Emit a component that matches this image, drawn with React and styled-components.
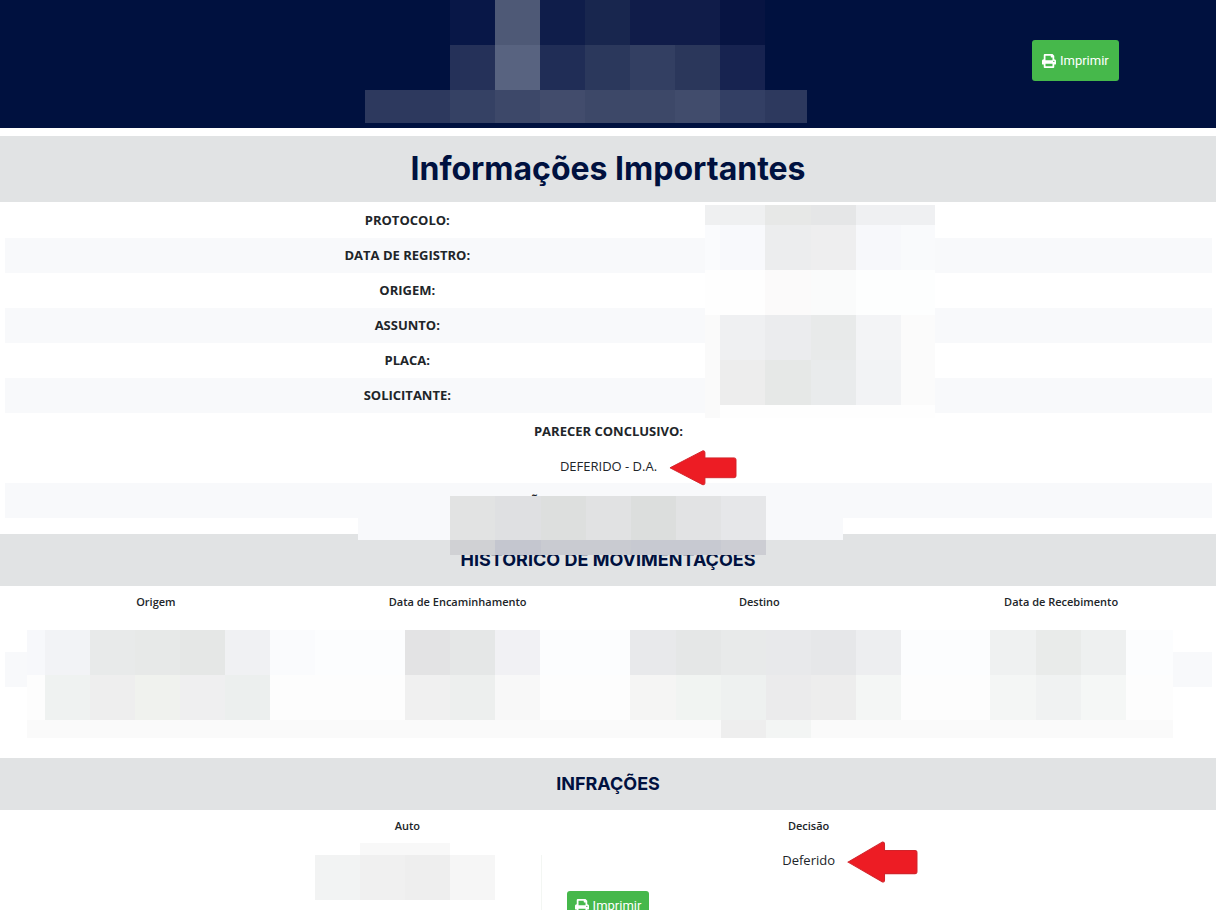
import React from 'react'
import styled, { createGlobalStyle } from 'styled-components'
import { FaPrint } from 'react-icons/fa'

// each block: [x, y, width, height, color]
const logoBlocks = [
    [85, 0, 45, 45, '#081747'],
    [130, 0, 45, 45, '#4e5976'],
    [175, 0, 45, 45, '#0f1d4a'],
    [220, 0, 45, 45, '#18264e'],
    [265, 0, 90, 45, '#101c49'],
    [355, 0, 45, 45, '#071442'],
    [85, 45, 45, 45, '#253159'],
    [130, 45, 45, 45, '#586380'],
    [175, 45, 45, 45, '#202d56'],
    [220, 45, 45, 45, '#2b385c'],
    [265, 45, 45, 45, '#333f62'],
    [310, 45, 45, 45, '#2b375b'],
    [355, 45, 45, 45, '#172350'],
    [0, 90, 85, 33, '#2d395e'],
    [85, 90, 45, 33, '#354164'],
    [130, 90, 45, 33, '#3d4869'],
    [175, 90, 45, 33, '#424c6c'],
    [220, 90, 90, 33, '#3d4868'],
    [310, 90, 45, 33, '#414c6c'],
    [355, 90, 45, 33, '#333f64'],
    [400, 90, 42, 33, '#2d395e'],
]

const infoBlocks = [
    [0, 0, 60, 20, '#eff0f1'],
    [60, 0, 46, 20, '#e7e8e7'],
    [106, 0, 45, 20, '#e5e6e7'],
    [151, 0, 79, 20, '#eff0f2'],
    [0, 20, 15, 45, '#fafbfd'],
    [15, 20, 45, 45, '#f8f9fc'],
    [60, 20, 46, 45, '#ecedee'],
    [106, 20, 45, 45, '#eeeeef'],
    [151, 20, 45, 45, '#f7f8fb'],
    [196, 20, 34, 45, '#f9fafc'],
    [0, 65, 60, 45, '#fefefe'],
    [60, 65, 46, 45, '#fbfafa'],
    [106, 65, 45, 45, '#fafbfb'],
    [151, 65, 79, 45, '#fdfefe'],
    [0, 110, 15, 103, '#fafafa'],
    [15, 110, 45, 45, '#eff0f2'],
    [60, 110, 46, 45, '#ebecee'],
    [106, 110, 45, 45, '#e8eaea'],
    [151, 110, 45, 45, '#f3f4f6'],
    [196, 110, 34, 90, '#fbfbfb'],
    [15, 155, 45, 45, '#ededed'],
    [60, 155, 46, 45, '#e6e8e7'],
    [106, 155, 45, 45, '#e9ebec'],
    [151, 155, 45, 45, '#f2f3f5'],
    [15, 200, 215, 13, '#fefefe'],
]

const opinionBlocks = [
    [0, 0, 485, 44, '#f8f9fb'],
    [92, 0, 45, 44, '#e2e3e3'],
    [137, 0, 46, 44, '#dfe0e2'],
    [183, 0, 45, 44, '#dddfde'],
    [228, 0, 45, 44, '#e1e2e3'],
    [273, 0, 45, 44, '#dcdedd'],
    [318, 0, 45, 44, '#e2e3e4'],
    [363, 0, 45, 44, '#e6e7e9'],
    [92, 44, 45, 15, '#d0d1d4'],
    [137, 44, 46, 15, '#c4c6cf'],
    [183, 44, 90, 15, '#c9cbd1'],
    [273, 44, 90, 15, '#c7c9d1'],
    [363, 44, 45, 15, '#cccdd3'],
]

const historyBlocks = [
    [27, 0, 18, 45, '#f7f8fb'],
    [45, 0, 45, 45, '#f2f3f6'],
    [90, 0, 45, 45, '#e8eaea'],
    [135, 0, 45, 45, '#e7e9e8'],
    [180, 0, 45, 45, '#e5e7e6'],
    [225, 0, 45, 45, '#f0f1f3'],
    [270, 0, 45, 45, '#fafbfd'],
    [315, 0, 90, 45, '#fcfdfe'],
    [405, 0, 45, 45, '#e3e3e4'],
    [450, 0, 45, 45, '#e5e7e7'],
    [495, 0, 45, 45, '#f1f1f4'],
    [540, 0, 90, 45, '#fcfdfe'],
    [630, 0, 46, 45, '#e8e9eb'],
    [676, 0, 45, 45, '#e5e7e7'],
    [721, 0, 45, 45, '#e8eaea'],
    [766, 0, 45, 45, '#e8e9eb'],
    [811, 0, 45, 45, '#e6e7e9'],
    [856, 0, 45, 45, '#edeef0'],
    [901, 0, 89, 45, '#fcfdfe'],
    [990, 0, 46, 45, '#eff1f1'],
    [1036, 0, 45, 45, '#e9ebea'],
    [1081, 0, 45, 45, '#eef0f0'],
    [1126, 0, 47, 45, '#fcfdfe'],
    [27, 45, 1146, 45, '#fdfdfd'],
    [45, 45, 45, 45, '#eff2f1'],
    [90, 45, 45, 45, '#eeeeee'],
    [135, 45, 45, 45, '#f0f2ee'],
    [180, 45, 45, 45, '#efeff0'],
    [225, 45, 45, 45, '#ecefee'],
    [405, 45, 45, 45, '#f0f0f0'],
    [450, 45, 45, 45, '#edefee'],
    [495, 45, 45, 45, '#f8f8f8'],
    [630, 45, 46, 45, '#f5f5f4'],
    [676, 45, 45, 45, '#f1f4f2'],
    [721, 45, 45, 45, '#eef1f0'],
    [766, 45, 45, 45, '#ebebec'],
    [811, 45, 45, 45, '#ededed'],
    [856, 45, 45, 45, '#f4f6f5'],
    [990, 45, 46, 45, '#f4f6f5'],
    [1036, 45, 45, 45, '#f0f2f2'],
    [1081, 45, 45, 45, '#f5f7f6'],
    [27, 90, 1146, 18, '#fafafa'],
    [721, 90, 45, 18, '#eeeeee'],
    [766, 90, 45, 18, '#f3f5f4'],
]

const infractionBlocks = [
    [45, 0, 90, 12, '#f8f8f8'],
    [0, 12, 45, 45, '#f2f3f3'],
    [45, 12, 45, 45, '#f0f0f0'],
    [90, 12, 45, 45, '#eeeeee'],
    [135, 12, 45, 45, '#f6f6f6'],
    [226, 12, 1, 55, '#f3f6f3'],
]

const labels = ['PROTOCOLO:', 'DATA DE REGISTRO:', 'ORIGEM:', 'ASSUNTO:', 'PLACA:', 'SOLICITANTE:']

const Blocks = ({ data }) => (
    <g shapeRendering='crispEdges'>
        {data.map(([x, y, w, h, fill]) => (
            <rect key={`${x}-${y}-${w}`} x={x} y={y} width={w} height={h} fill={fill}/>
        ))}
    </g>
)

const RedArrow = ({ large }) => (
    <Arrow $large={large} viewBox='0 0 70 40' preserveAspectRatio='none' aria-hidden='true'>
        <path
            d='M1 20 L35 1 Q37 1 37 3 V9 H67 Q69 9 69 11 V29 Q69 31 67 31 H37 V37 Q37 39 35 39 Z'
            fill='#ed1c24'
            stroke='#d2232a'
            strokeWidth='1'
        />
    </Arrow>
)

const App = () => {
    const print = () => window.print()

    return (
        <>
            <GlobalStyle/>
            <Header>
                <Logo viewBox='0 0 486 128' role='img' aria-label='Logo'>
                    <Blocks data={logoBlocks}/>
                </Logo>
                <PrintButton $large onClick={print}><FaPrint/>Imprimir</PrintButton>
            </Header>
            <main>
                <TitleBand>
                    <Title>Informações Importantes</Title>
                </TitleBand>
                <Info>
                    {labels.map((label) => (
                        <InfoRow key={label}>
                            <dt>{label}</dt>
                            <dd/>
                        </InfoRow>
                    ))}
                    <InfoRow $full>
                        <dt>PARECER CONCLUSIVO:</dt>
                    </InfoRow>
                    <InfoRow $full>
                        <dd><Marked>DEFERIDO - D.A.<RedArrow/></Marked></dd>
                    </InfoRow>
                    <InfoRow $full>
                        <HiddenLabel>Ã</HiddenLabel>
                    </InfoRow>
                    <InfoCover viewBox='0 0 230 213' aria-hidden='true'>
                        <Blocks data={infoBlocks}/>
                    </InfoCover>
                    <OpinionCover viewBox='0 0 485 59' aria-hidden='true'>
                        <Blocks data={opinionBlocks}/>
                    </OpinionCover>
                </Info>
                <Band>
                    <Subtitle>HISTÓRICO DE MOVIMENTAÇÕES</Subtitle>
                </Band>
                <History>
                    <Table>
                        <thead>
                            <tr>
                                <th>Origem</th>
                                <th>Data de Encaminhamento</th>
                                <th>Destino</th>
                                <th>Data de Recebimento</th>
                            </tr>
                        </thead>
                        <tbody>
                            <tr><td/><td/><td/><td/></tr>
                            <tr><td/><td/><td/><td/></tr>
                            <tr><td/><td/><td/><td/></tr>
                        </tbody>
                    </Table>
                    <HistoryCover viewBox='0 0 1216 108' preserveAspectRatio='none' aria-hidden='true'>
                        <Blocks data={historyBlocks}/>
                    </HistoryCover>
                </History>
                <Band>
                    <Subtitle>INFRAÇÕES</Subtitle>
                </Band>
                <Infractions>
                    <Table>
                        <thead>
                            <tr>
                                <th>Auto</th>
                                <th>Decisão</th>
                            </tr>
                        </thead>
                        <tbody>
                            <tr>
                                <td>
                                    <InfractionCover viewBox='0 0 227 67' aria-hidden='true'>
                                        <Blocks data={infractionBlocks}/>
                                    </InfractionCover>
                                </td>
                                <td><Marked>Deferido<RedArrow large/></Marked></td>
                            </tr>
                        </tbody>
                    </Table>
                </Infractions>
                <Footer>
                    <PrintButton onClick={print}><FaPrint/>Imprimir</PrintButton>
                </Footer>
            </main>
        </>
    )
}

const GlobalStyle = createGlobalStyle`
    * {
        box-sizing: border-box;
    }
    body {
        margin: 0;
        background-color: #fff;
        color: #212529;
        font-family: "Open Sans", "Noto Sans", sans-serif;
        font-size: 13px;
        line-height: 21px;
    }
`

const Header = styled.header`
    display: grid;
    grid-template-columns: 1fr 486px 1fr;
    align-items: center;
    height: 128px;
    margin-bottom: 8px;
    background-color: #00113f;
`

const Logo = styled.svg`
    grid-column: 2;
    display: block;
    width: 486px;
    height: 128px;
`

const PrintButton = styled.button`
    display: inline-flex;
    align-items: center;
    justify-content: center;
    gap: 4px;
    height: ${(props) => (props.$large ? 41 : 30)}px;
    padding: 0 ${(props) => (props.$large ? 10 : 8)}px;
    border: none;
    border-radius: 3px;
    background-color: #46b84b;
    color: #fff;
    font-family: Roboto, sans-serif;
    font-size: 13px;
    line-height: 20px;
    cursor: pointer;

    ${Header} & {
        justify-self: end;
        margin-right: 8vw;
        margin-bottom: 7px;
    }

    svg {
        width: 14px;
        height: 14px;
    }

    &:hover {
        background-color: #3da542;
    }
`

const TitleBand = styled.div`
    display: flex;
    align-items: center;
    justify-content: center;
    height: 66px;
    background-color: #e1e3e4;
`

const Band = styled(TitleBand)`
    height: 52px;
`

const Title = styled.h1`
    margin: 0;
    color: #00113f;
    font-family: Inter, sans-serif;
    font-size: 32px;
    font-weight: 700;
    line-height: 40px;
`

const Subtitle = styled.h2`
    margin: 0;
    color: #00113f;
    font-family: Inter, sans-serif;
    font-size: 18px;
    font-weight: 700;
    line-height: 24px;
`

const Info = styled.dl`
    position: relative;
    margin: 0;
    padding: 1px 4px 16px 5px;
`

const InfoRow = styled.div`
    display: grid;
    grid-template-columns: ${(props) => (props.$full ? '1fr' : '1fr 1fr')};
    min-height: 35px;
    padding: ${(props) => (props.$full ? '8px 16.66% 6px' : '7px 16.66%')};
    text-align: center;

    &:nth-of-type(2n):not(:nth-of-type(8)),
    &:nth-of-type(9) {
        background-color: #f8f9fb;
    }

    dt {
        font-weight: 700;
    }

    dd {
        margin: 0;
    }
`

const HiddenLabel = styled.dt`
    padding-right: 148px;
`

const Marked = styled.span`
    position: relative;
`

const Arrow = styled.svg`
    position: absolute;
    top: 50%;
    left: calc(100% + 12px);
    width: ${(props) => (props.$large ? 71 : 68)}px;
    height: ${(props) => (props.$large ? 42 : 36)}px;
    transform: translateY(-45%);
`

const InfoCover = styled.svg`
    position: absolute;
    top: 3px;
    left: calc(50% + 97px);
    width: 230px;
    height: 213px;
`

const OpinionCover = styled.svg`
    position: absolute;
    top: 294px;
    left: calc(50% - 250px);
    width: 485px;
    height: 59px;
`

const History = styled.section`
    position: relative;
    padding: 0 4px 36px 5px;
`

const Table = styled.table`
    width: 100%;
    border-collapse: collapse;
    table-layout: fixed;
    text-align: center;

    th {
        height: 31px;
        padding: 0;
        font-size: 11px;
        font-weight: 600;
    }

    td {
        height: 35px;
        padding: 0;
    }

    tbody tr:nth-child(2n) td {
        background-color: #f8f9fb;
    }
`

const HistoryCover = styled.svg`
    position: absolute;
    top: 44px;
    left: 0;
    width: 100%;
    height: 108px;
`

const Infractions = styled.section`
    padding: 0 17%;

    td {
        position: relative;
        height: 38px;
    }
`

const InfractionCover = styled.svg`
    position: absolute;
    top: 2px;
    left: calc(50% - 92px);
    width: 227px;
    height: 67px;
`

const Footer = styled.footer`
    display: flex;
    justify-content: center;
    padding: 12px 0 24px;
`

export default App
